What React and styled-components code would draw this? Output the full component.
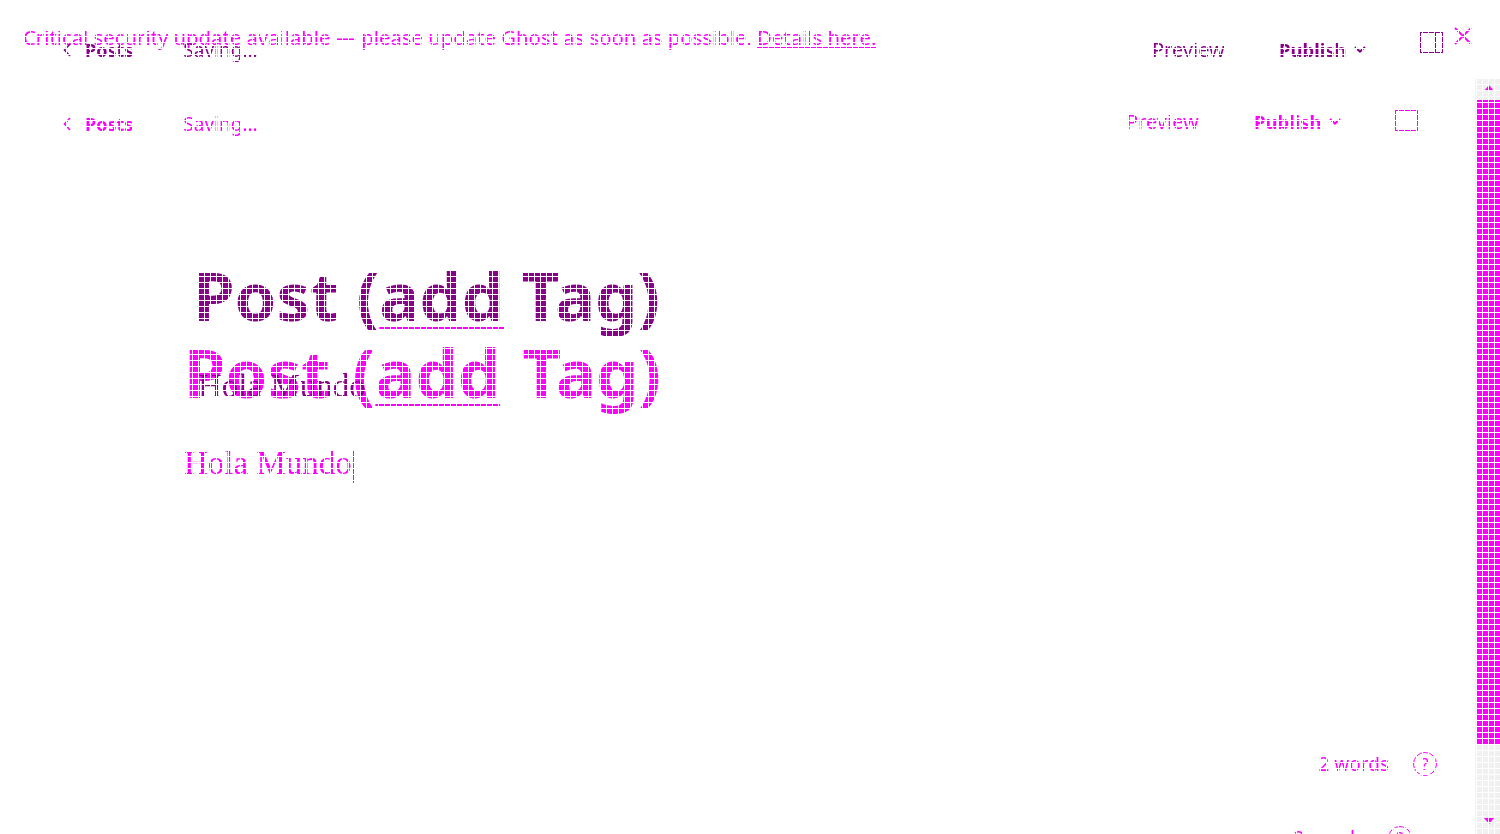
import React from 'react'
import styled, { createGlobalStyle } from 'styled-components'

const Global = createGlobalStyle`
  html, body {
    margin: 0;
    padding: 0;
    background: #fff;
    overflow: hidden;
  }
`

const Page = styled.div`
  position: relative;
  display: grid;
  grid-template-columns: 1500px;
  grid-template-rows: 834px;
  overflow: hidden;
  background: #fff;
  font-family: "Noto Sans", sans-serif;

  & > * {
    grid-area: 1 / 1;
  }
`

const Filters = styled.svg`
  position: absolute;
  width: 0;
  height: 0;
`

const Banner = styled.div`
  display: flex;
  justify-content: space-between;
  align-items: flex-start;
  padding: 24px 28px 0 23px;
  font-size: 20.3px;
  line-height: 26px;
  color: #ff00ff;
  white-space: nowrap;
  filter: url(#hardFront);
  mix-blend-mode: multiply;

  a {
    text-decoration: underline;
  }

  svg {
    margin-top: 3px;
  }
`

const Editor = styled.div`
  display: flex;
  flex-direction: column;
  box-sizing: border-box;
  width: ${p => (p.$front ? 1475 : 1500)}px;
  height: ${p => (p.$front ? 908 : 834)}px;
  padding: ${p => (p.$front ? 111 : 37)}px 0 57px;
  color: ${p => (p.$front ? '#ff00ff' : '#8b008b')};
  filter: ${p => (p.$front ? 'url(#hardFront)' : 'url(#hardBack)')};
  mix-blend-mode: multiply;
`

const Toolbar = styled.div`
  display: flex;
  align-items: center;
  height: 26px;
  padding: 0 57px 0 63px;
  font-size: 20px;
`

const BackLink = styled.div`
  display: flex;
  align-items: center;
  gap: 13px;
  font-weight: 700;
  font-size: 18px;
`

const Status = styled.div`
  margin-left: 50px;
  font-size: 19px;
`

const Actions = styled.div`
  margin-left: auto;
  display: flex;
  align-items: center;
  margin-bottom: ${p => (p.$front ? 6 : 2)}px;
`

const Preview = styled.div`
  width: ${p => (p.$front ? 128 : 127)}px;
`

const Publish = styled.div`
  display: flex;
  align-items: center;
  gap: 7px;
  width: 141px;
  font-size: 18.5px;
  font-weight: 700;
`

const WindowIcon = styled.svg`
  margin-bottom: ${p => (p.$front ? 2 : 14)}px;
`

const Title = styled.h1`
  margin: ${p => (p.$front ? 195 : 192)}px 0 0 ${p => (p.$front ? 184 : 193)}px;
  font-size: 67px;
  line-height: 80px;
  font-weight: 700;
  white-space: nowrap;
  word-spacing: ${p => (p.$front ? 5 : 0)}px;

  u {
    text-decoration: underline solid 2px #ff00ff;
    text-underline-offset: 6px;
  }
`

const Body = styled.p`
  margin: 31px 0 0 ${p => (p.$front ? 184 : 198)}px;
  font-family: "Liberation Serif", serif;
  font-size: 33px;
  line-height: 40px;
  white-space: nowrap;
`

const Caret = styled.span`
  display: inline-block;
  width: 1px;
  height: 33px;
  margin-left: 1px;
  background: currentColor;
  vertical-align: middle;
`

const Count = styled.div`
  margin-top: auto;
  padding-right: 63px;
  display: flex;
  justify-content: flex-end;
  align-items: center;
  gap: 24px;
  font-size: 19px;
  color: #ff00ff;
  white-space: nowrap;
`

const Help = styled.span`
  box-sizing: border-box;
  width: 24px;
  height: 24px;
  border: 1px solid currentColor;
  border-radius: 50%;
  display: inline-flex;
  align-items: center;
  justify-content: center;
  font-size: 16px;
`

const Scrollbar = styled.div`
  justify-self: end;
  box-sizing: border-box;
  width: 25px;
  margin-top: 78px;
  padding-left: 2px;
  background: #f0f0f0;
  display: flex;
  flex-direction: column;
  align-items: center;
`

const Arrow = styled.span`
  width: 0;
  height: 0;
  margin-top: ${p => (p.$down ? 73 : 7)}px;
  border-left: 5px solid transparent;
  border-right: 5px solid transparent;
  ${p => (p.$down ? 'border-top: 6px solid #ff00ff;' : 'border-bottom: 6px solid #ff00ff;')}
`

const Thumb = styled.div`
  margin-top: 9px;
  width: 100%;
  height: 645px;
  background: #ff00ff;
`

// white 6px lattice lying over the whole page
const Lattice = styled.div`
  position: absolute;
  inset: 0;
  pointer-events: none;
  background-image:
    repeating-linear-gradient(to right, #fff 0 1px, transparent 1px 6px),
    repeating-linear-gradient(to bottom, #fff 0 1px, transparent 1px 6px);
`

const EditorLayer = ({ front, caret }) => (
  <Editor $front={front}>
    <Toolbar>
      <BackLink>
        <svg width="9" height="14" viewBox="0 0 9 14" fill="none" stroke="currentColor" strokeWidth="1.6"><path d="M7 1 1.5 7 7 13" /></svg>
        Posts
      </BackLink>
      <Status>Saving...</Status>
      <Actions $front={front}>
        <Preview $front={front}>Preview</Preview>
        <Publish>
          Publish
          <svg width="12" height="7" viewBox="0 0 12 7" fill="none" stroke="currentColor" strokeWidth="2.2"><path d="M1 1l5 4.5L11 1" /></svg>
        </Publish>
        <WindowIcon $front={front} width="23" height="21" viewBox="0 0 23 21" fill="none" stroke="currentColor"><rect x=".5" y=".5" width="22" height="20" /><path d="M15.5 1v19" /></WindowIcon>
      </Actions>
    </Toolbar>
    <Title $front={front}>Post (<u>add</u> Tag)</Title>
    <Body $front={front}>Hola Mundo{caret && <Caret />}</Body>
    <Count>2 words <Help>?</Help></Count>
  </Editor>
)

const App = () => (
  <Page>
    <Global />
    <Filters aria-hidden="true">
      <filter id="hardFront" colorInterpolationFilters="sRGB">
        <feComponentTransfer>
          <feFuncG type="discrete" tableValues="0 0 0 1" />
        </feComponentTransfer>
      </filter>
      <filter id="hardBack" colorInterpolationFilters="sRGB">
        <feComponentTransfer>
          <feFuncR type="discrete" tableValues=".545 .545 .545 .545 .545 .545 .545 1" />
          <feFuncG type="discrete" tableValues="0 0 0 0 0 0 0 1" />
          <feFuncB type="discrete" tableValues=".545 .545 .545 .545 .545 .545 .545 1" />
        </feComponentTransfer>
      </filter>
    </Filters>
    <EditorLayer />
    <EditorLayer front caret />
    <Banner>
      <span>Critical security update available — please update Ghost as soon as possible. <a>Details here.</a></span>
      <svg width="18" height="18" viewBox="0 0 18 18" stroke="#ff00ff" strokeWidth="1.8"><path d="M1 1l16 16M17 1 1 17" /></svg>
    </Banner>
    <Scrollbar>
      <Arrow />
      <Thumb />
      <Arrow $down />
    </Scrollbar>
    <Lattice />
  </Page>
)

export default App
